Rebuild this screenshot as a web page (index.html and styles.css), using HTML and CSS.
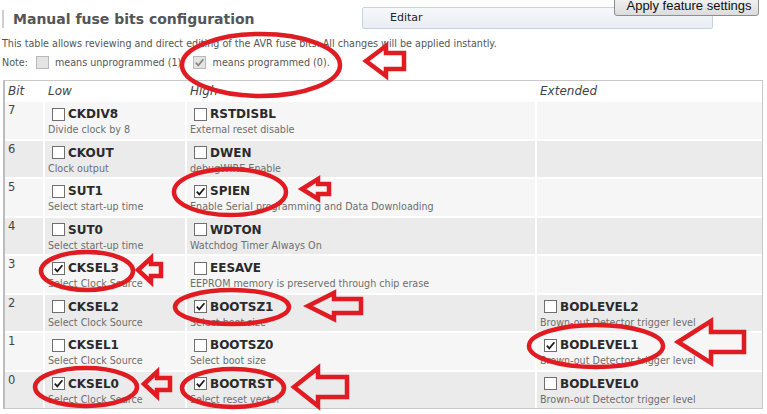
FILE: index.html
```html
<!DOCTYPE html>
<html>
<head>
<meta charset="utf-8">
<title>Manual fuse bits configuration</title>
<link rel="stylesheet" href="styles.css">
</head>
<body>
<div class="top">
  <h2 class="title">Manual fuse bits configuration</h2>
  <div class="editar">Editar</div>
</div>
<button class="apply">Apply feature settings</button>
<p class="intro">This table allows reviewing and direct editing of the AVR fuse bits. All changes will be applied instantly.</p>
<p class="note">Note:<span class="cb dis n1"></span>means unprogrammed (1);<span class="cb dis on n2"><svg viewBox="0 0 11 11"><path d="M1.8 5.6 L4.3 8.4 L9.4 2.2"/></svg></span>means programmed (0).</p>

<div class="fuses">
  <div class="row head">
    <div class="cell">Bit</div><div class="cell">Low</div><div class="cell">High</div><div class="cell">Extended</div>
  </div>
  <div class="row lt">
    <div class="cell num">7</div>
    <div class="cell"><div class="fuse"><span class="cb"></span><b>CKDIV8</b></div><div class="desc">Divide clock by 8</div></div>
    <div class="cell"><div class="fuse"><span class="cb"></span><b>RSTDISBL</b></div><div class="desc">External reset disable</div></div>
    <div class="cell"></div>
  </div>
  <div class="row dk">
    <div class="cell num">6</div>
    <div class="cell"><div class="fuse"><span class="cb"></span><b>CKOUT</b></div><div class="desc">Clock output</div></div>
    <div class="cell"><div class="fuse"><span class="cb"></span><b>DWEN</b></div><div class="desc">debugWIRE Enable</div></div>
    <div class="cell"></div>
  </div>
  <div class="row lt">
    <div class="cell num">5</div>
    <div class="cell"><div class="fuse"><span class="cb"></span><b>SUT1</b></div><div class="desc">Select start-up time</div></div>
    <div class="cell"><div class="fuse"><span class="cb on"><svg viewBox="0 0 11 11"><path d="M1.8 5.6 L4.3 8.4 L9.4 2.2"/></svg></span><b>SPIEN</b></div><div class="desc">Enable Serial programming and Data Downloading</div></div>
    <div class="cell"></div>
  </div>
  <div class="row dk">
    <div class="cell num">4</div>
    <div class="cell"><div class="fuse"><span class="cb"></span><b>SUT0</b></div><div class="desc">Select start-up time</div></div>
    <div class="cell"><div class="fuse"><span class="cb"></span><b>WDTON</b></div><div class="desc">Watchdog Timer Always On</div></div>
    <div class="cell"></div>
  </div>
  <div class="row lt">
    <div class="cell num">3</div>
    <div class="cell"><div class="fuse"><span class="cb on"><svg viewBox="0 0 11 11"><path d="M1.8 5.6 L4.3 8.4 L9.4 2.2"/></svg></span><b>CKSEL3</b></div><div class="desc">Select Clock Source</div></div>
    <div class="cell"><div class="fuse"><span class="cb"></span><b>EESAVE</b></div><div class="desc">EEPROM memory is preserved through chip erase</div></div>
    <div class="cell"></div>
  </div>
  <div class="row dk">
    <div class="cell num">2</div>
    <div class="cell"><div class="fuse"><span class="cb"></span><b>CKSEL2</b></div><div class="desc">Select Clock Source</div></div>
    <div class="cell"><div class="fuse"><span class="cb on"><svg viewBox="0 0 11 11"><path d="M1.8 5.6 L4.3 8.4 L9.4 2.2"/></svg></span><b>BOOTSZ1</b></div><div class="desc">Select boot size</div></div>
    <div class="cell"><div class="fuse"><span class="cb"></span><b>BODLEVEL2</b></div><div class="desc">Brown-out Detector trigger level</div></div>
  </div>
  <div class="row lt">
    <div class="cell num">1</div>
    <div class="cell"><div class="fuse"><span class="cb"></span><b>CKSEL1</b></div><div class="desc">Select Clock Source</div></div>
    <div class="cell"><div class="fuse"><span class="cb"></span><b>BOOTSZ0</b></div><div class="desc">Select boot size</div></div>
    <div class="cell"><div class="fuse"><span class="cb on"><svg viewBox="0 0 11 11"><path d="M1.8 5.6 L4.3 8.4 L9.4 2.2"/></svg></span><b>BODLEVEL1</b></div><div class="desc">Brown-out Detector trigger level</div></div>
  </div>
  <div class="row dk">
    <div class="cell num">0</div>
    <div class="cell"><div class="fuse"><span class="cb on"><svg viewBox="0 0 11 11"><path d="M1.8 5.6 L4.3 8.4 L9.4 2.2"/></svg></span><b>CKSEL0</b></div><div class="desc">Select Clock Source</div></div>
    <div class="cell"><div class="fuse"><span class="cb on"><svg viewBox="0 0 11 11"><path d="M1.8 5.6 L4.3 8.4 L9.4 2.2"/></svg></span><b>BOOTRST</b></div><div class="desc">Select reset vector</div></div>
    <div class="cell"><div class="fuse"><span class="cb"></span><b>BODLEVEL0</b></div><div class="desc">Brown-out Detector trigger level</div></div>
  </div>
</div>

<svg class="marks" viewBox="0 0 767 414" width="767" height="414">
  <g fill="none" stroke="#e01b22" stroke-width="4.5" stroke-linejoin="miter">
    <ellipse cx="261" cy="65" rx="79" ry="31"/>
    <polygon points="366,61 386,46 386,53 404,53 404,69 386,69 386,76"/>
    <ellipse cx="230" cy="192" rx="56" ry="23"/>
    <polygon points="302,189 318,179 318,184 329,184 329,194 318,194 318,199"/>
    <ellipse cx="87" cy="271" rx="46" ry="19"/>
    <polygon points="138,270 151,258 151,264 161,264 161,276 151,276 151,282"/>
    <ellipse cx="232" cy="307" rx="57" ry="17"/>
    <polygon points="308,306 334,293 334,299 361,299 361,313 334,313 334,319"/>
    <ellipse cx="596" cy="346" rx="67" ry="21"/>
    <polygon points="678,342 711,321 711,332 744,332 744,352 711,352 711,363"/>
    <ellipse cx="86" cy="387" rx="51" ry="19"/>
    <polygon points="144,384 157,372 157,378 170,378 170,390 157,390 157,396"/>
    <ellipse cx="233" cy="388" rx="51" ry="19"/>
    <polygon points="294,387 318,368 318,377 347,377 347,397 318,397 318,406"/>
  </g>
</svg>
</body>
</html>
```
FILE: styles.css
```css
html, body {
  margin: 0;
  padding: 0;
}
body {
  position: relative;
  width: 767px;
  height: 414px;
  overflow: hidden;
  background: #fff;
  font-family: "DejaVu Sans", Verdana, sans-serif;
  color: #333;
}
.top {
  display: flex;
  align-items: flex-start;
  height: 30px;
}
.title {
  margin: 10px 0 0 2px;
  padding-left: 9px;
  border-left: 2px solid #cfcfcf;
  font-size: 14px;
  line-height: 18px;
  font-weight: bold;
  color: #555;
}
.editar {
  width: 351px;
  height: 22px;
  box-sizing: border-box;
  margin: 7px 54px 0 auto;
  padding-left: 27px;
  border: 1px solid #c9d3de;
  border-radius: 2px;
  background: linear-gradient(#f6f8fb, #e9eef4);
  font-size: 11px;
  line-height: 20px;
  color: #222;
}
.apply {
  position: absolute;
  left: 614px;
  top: -5px;
  width: 145px;
  height: 21px;
  box-sizing: border-box;
  margin: 0;
  padding: 0 0 0 5px;
  border: 1px solid #8d8d8d;
  border-radius: 3px;
  background: linear-gradient(#f5f5f5, #dcdcdc);
  font-family: "Liberation Sans", Arial, sans-serif;
  font-size: 13px;
  line-height: 17px;
  color: #111;
  text-align: center;
}
.intro, .note {
  margin: 0 0 0 2px;
  font-size: 9.6px;
  line-height: 14px;
  color: #555;
  white-space: nowrap;
}
.intro { margin-top: 7px; }
.note { margin-top: 5px; }
.cb {
  display: inline-block;
  width: 13px;
  height: 13px;
  box-sizing: border-box;
  border: 1px solid #6f6f6f;
  background: #fff;
  margin: 0 3px 0 4px;
  flex: none;
}
.cb svg {
  display: block;
  width: 11px;
  height: 11px;
}
.cb path {
  fill: none;
  stroke: #1a1a1a;
  stroke-width: 1.7;
}
.cb.dis {
  border-color: #b9b9b9;
  background: #e4e4e4;
  vertical-align: -3px;
}
.cb.dis path { stroke: #888; }
.note .n1 { margin: 0 6px 0 8px; }
.note .n2 { margin: 0 7px 0 8px; }

.fuses {
  display: grid;
  grid-template-columns: 38px 140px 348px 225px;
  grid-template-rows: 19px repeat(8, 36.5px);
  gap: 2px;
  width: max-content;
  margin: 10px 0 0 3px;
  border: 1px solid #c8c8c8;
  border-left: 2px solid #bdbdbd;
  background: #fff;
}
.row { display: contents; }
.cell {
  padding: 0 3px;
  min-width: 0;
  overflow: hidden;
}
.head .cell {
  background: #fff;
  font-size: 12px;
  font-style: italic;
  line-height: 20px;
  color: #444;
}
.lt .cell { background: #f6f6f6; }
.dk .cell { background: #ebebeb; }
.num {
  padding-top: 2px;
  font-size: 11.5px;
  line-height: 13px;
  color: #444;
}
.fuse {
  display: flex;
  align-items: center;
  height: 18px;
  margin-top: 3px;
}
.fuse b {
  font-size: 12px;
  font-weight: bold;
  color: #2a2a2a;
}
.desc {
  margin-top: 1px;
  font-size: 9.6px;
  line-height: 12px;
  color: #6e6e6e;
  white-space: nowrap;
}
.marks {
  position: absolute;
  left: 0;
  top: 0;
  pointer-events: none;
}
```
